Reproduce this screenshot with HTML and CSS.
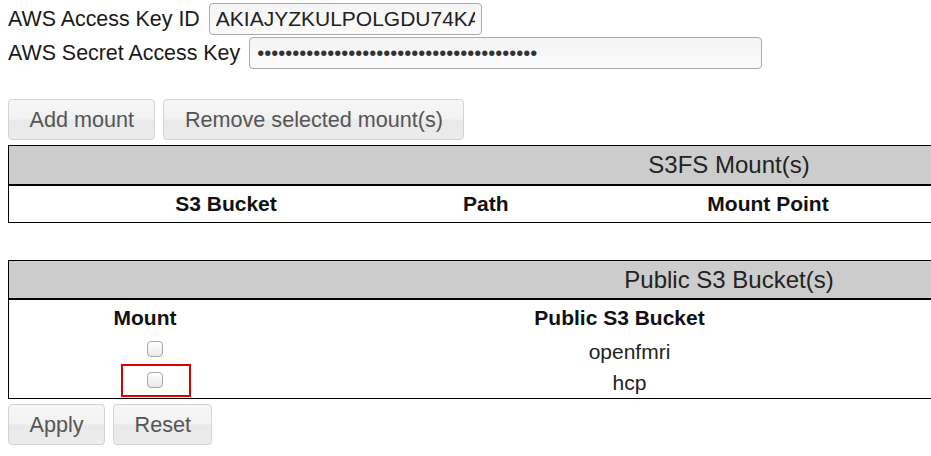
FILE: index.html
```html
<!DOCTYPE html>
<html>
<head>
<meta charset="utf-8">
<link rel="stylesheet" href="styles.css">
</head>
<body>
<div class="creds">
  <div class="field">
    <label class="lbl" for="akid">AWS Access Key ID</label>
    <input class="txt key-id" id="akid" type="text" value="AKIAJYZKULPOLGDU74KAQ7XR">
  </div>
  <div class="field">
    <label class="lbl" for="secret">AWS Secret Access Key</label>
    <input class="txt key-secret" id="secret" type="password" value="abcdefghijklmnopqrstuvwxyz0123456789ABCD">
  </div>
</div>

<div class="btn-row top-btns">
  <button class="btn">Add mount</button>
  <button class="btn">Remove selected mount(s)</button>
</div>

<div class="table-wrap">
  <table class="grid mounts">
    <colgroup>
      <col class="m1"><col class="m2"><col class="m3"><col class="m4">
    </colgroup>
    <thead>
      <tr><th class="title" colspan="4">S3FS Mount(s)</th></tr>
      <tr class="heads">
        <th>S3 Bucket</th><th>Path</th><th>Mount Point</th><th></th>
      </tr>
    </thead>
  </table>
</div>

<div class="table-wrap second">
  <table class="grid buckets">
    <colgroup>
      <col class="b1"><col class="b2"><col class="b3">
    </colgroup>
    <thead>
      <tr><th class="title" colspan="3">Public S3 Bucket(s)</th></tr>
      <tr class="heads">
        <th>Mount</th><th>Public S3 Bucket</th><th></th>
      </tr>
    </thead>
    <tbody>
      <tr class="row">
        <td><input class="chk" type="checkbox"></td>
        <td>openfmri</td>
        <td></td>
      </tr>
      <tr class="row">
        <td class="hl-cell"><input class="chk" type="checkbox"><span class="hl"></span></td>
        <td>hcp</td>
        <td></td>
      </tr>
    </tbody>
  </table>
</div>

<div class="btn-row bottom-btns">
  <button class="btn">Apply</button>
  <button class="btn">Reset</button>
</div>
</body>
</html>
```

FILE: styles.css
```css
html, body {
  margin: 0;
  padding: 0;
  background: #fff;
  overflow: hidden;
}

body {
  padding: 3px 0 0 8px;
  font-family: "Liberation Sans", Arial, sans-serif;
  color: #222;
}

.creds {
  display: flex;
  flex-direction: column;
  gap: 2px;
}

.field {
  display: flex;
  align-items: center;
  gap: 9px;
  height: 32px;
}

.lbl {
  font-size: 21.4px;
  color: #1a1a1a;
  white-space: nowrap;
}

.txt {
  box-sizing: border-box;
  height: 32px;
  margin: 0;
  padding: 0 6px;
  font-family: "Liberation Sans", Arial, sans-serif;
  font-size: 21px;
  color: #222;
  border: 1px solid #ababab;
  border-radius: 4px;
  background: linear-gradient(to bottom, #f4f4f4, #fbfbfb);
  outline: none;
}

.key-id { width: 273px; }
.key-secret { width: 513px; font-size: 20px; color: #333; padding-left: 7px; }

.btn-row {
  display: flex;
  gap: 8px;
}

.top-btns { margin-top: 30px; }
.bottom-btns { margin-top: 5px; }

.btn {
  box-sizing: border-box;
  height: 41px;
  margin: 0;
  padding: 0 20.5px;
  font-family: "Liberation Sans", Arial, sans-serif;
  font-size: 21.6px;
  color: #555;
  border: 1px solid #d3d3d3;
  border-radius: 4px;
  background: linear-gradient(to bottom, #f6f6f6 0%, #f2f2f2 48%, #e9e9e9 52%, #ececec 100%);
  cursor: pointer;
}

.table-wrap {
  margin-top: 5px;
  overflow: hidden;
}

.table-wrap.second { margin-top: 37px; }

.grid {
  width: 1442px;
  table-layout: fixed;
  border-collapse: separate;
  border-spacing: 0;
  border: 1px solid #000;
  font-size: 21px;
}

.m1 { width: 454px; }
.m2 { width: 60px; }
.m3 { width: 510px; }
.m4 { width: 416px; }

.b1 { width: 292px; }
.b2 { width: 657px; }
.b3 { width: 491px; }

.title {
  height: 38px;
  padding: 0;
  background: #ccc;
  border-bottom: 2px solid #000;
  font-size: 24px;
  font-weight: normal;
  color: #222;
  text-align: center;
}

.buckets .title { height: 37px; }

.heads th {
  height: 36px;
  padding: 0 20px 0 0;
  font-weight: bold;
  color: #111;
  text-align: center;
}

.row td {
  height: 31px;
  padding: 0;
  text-align: center;
  color: #222;
  line-height: 24px;
}

.chk {
  appearance: none;
  -webkit-appearance: none;
  box-sizing: border-box;
  width: 16px;
  height: 16px;
  margin: 0;
  vertical-align: 2px;
  border: 1px solid #a8a8a8;
  border-radius: 4px;
  background: linear-gradient(to bottom, #ffffff, #e9e9e9);
}

.row td.hl-cell {
  position: relative;
}

.hl {
  position: absolute;
  left: calc(50% - 34px);
  top: -3px;
  box-sizing: border-box;
  width: 70px;
  height: 33px;
  border: 2px solid #e00000;
}
```
